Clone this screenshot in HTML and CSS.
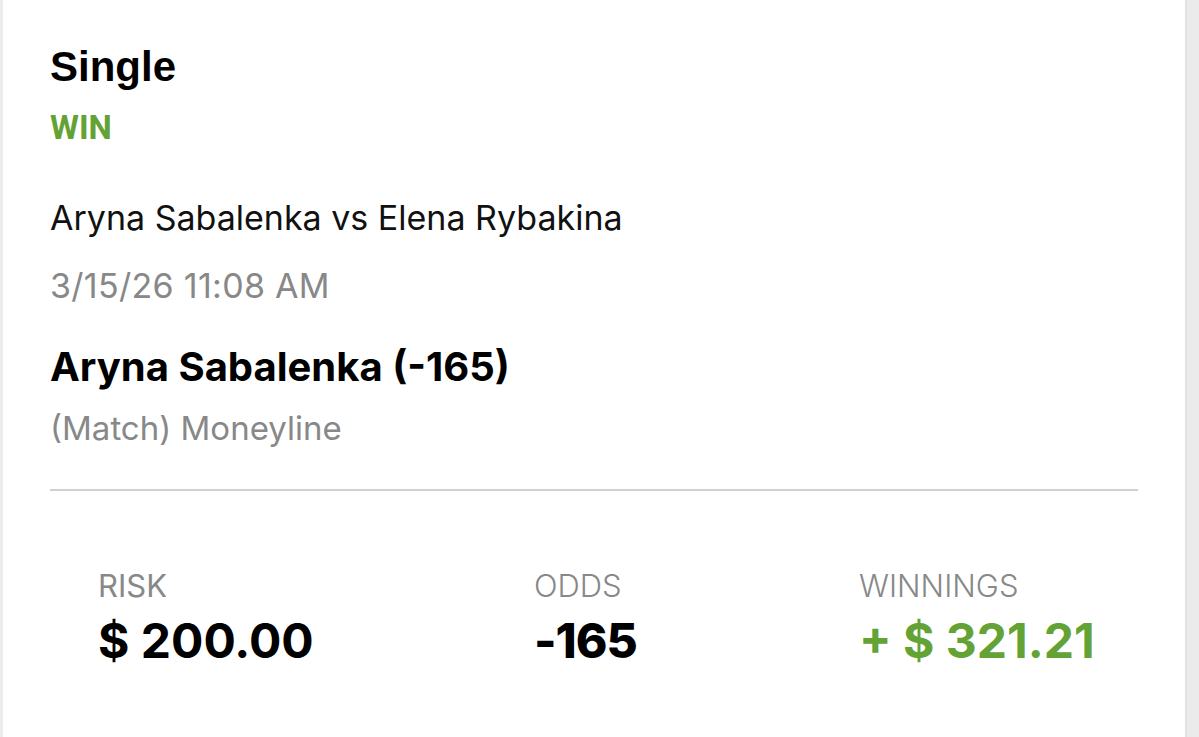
FILE: index.html
```html
<!DOCTYPE html>
<html>
<head>
<meta charset="utf-8">
<link rel="stylesheet" href="styles.css">
</head>
<body>
<div class="card">
  <div class="title">Single</div>
  <div class="status">WIN</div>
  <div class="event">Aryna Sabalenka vs Elena Rybakina</div>
  <div class="date">3/15/26 11:08 AM</div>
  <div class="pick">Aryna Sabalenka (-165)</div>
  <div class="market">(Match) Moneyline</div>
  <div class="divider"></div>
  <div class="stats">
    <div class="stat">
      <div class="label">RISK</div>
      <div class="value">$ 200.00</div>
    </div>
    <div class="stat">
      <div class="label light">ODDS</div>
      <div class="value odds">-165</div>
    </div>
    <div class="stat">
      <div class="label light">WINNINGS</div>
      <div class="value green">+ $ 321.21</div>
    </div>
  </div>
</div>
</body>
</html>
```
FILE: styles.css
```css
html, body {
  margin: 0;
  padding: 0;
  background: #ebebeb;
}
.card {
  margin-left: 3px;
  width: 1184px;
  min-height: 737px;
  box-sizing: border-box;
  background: #ffffff;
  border-right: 2px solid #e2e2e2;
  padding: 43px 47px 0 47px;
  color: #000;
}
.title {
  font-family: "Liberation Sans", Arial, sans-serif;
  font-weight: 700;
  font-size: 42px;
  line-height: 48px;
}
.status {
  font-family: Roboto, "Liberation Sans", sans-serif;
  font-weight: 700;
  font-size: 33px;
  line-height: 40px;
  color: #63a235;
  margin-top: 17px;
}
.event {
  font-family: Inter, "Liberation Sans", sans-serif;
  font-size: 34px;
  line-height: 40px;
  margin-top: 50px;
  color: #111;
}
.date {
  font-family: Inter, "Liberation Sans", sans-serif;
  font-size: 34px;
  line-height: 40px;
  margin-top: 28px;
  color: #888;
  letter-spacing: 0.3px;
}
.pick {
  font-family: Inter, "Liberation Sans", sans-serif;
  font-weight: 700;
  font-size: 40px;
  line-height: 48px;
  margin-top: 37px;
  color: #000;
}
.market {
  font-family: Inter, "Liberation Sans", sans-serif;
  font-size: 33px;
  line-height: 40px;
  margin-top: 17px;
  color: #888;
}
.divider {
  height: 2px;
  background: #d0d0d0;
  margin-top: 41px;
}
.stats {
  display: grid;
  grid-template-columns: 436px 325px 1fr;
  padding-left: 48px;
  margin-top: 77px;
}
.label {
  font-family: Inter, "Liberation Sans", sans-serif;
  font-size: 31px;
  line-height: 36px;
  color: #888;
}
.label.light {
  font-weight: 300;
}
.value {
  font-family: Inter, "Liberation Sans", sans-serif;
  font-weight: 700;
  font-size: 48px;
  line-height: 56px;
  margin-top: 9px;
}
.odds {
  font-weight: 800;
  letter-spacing: -1px;
}
.green {
  color: #63a235;
}
```
